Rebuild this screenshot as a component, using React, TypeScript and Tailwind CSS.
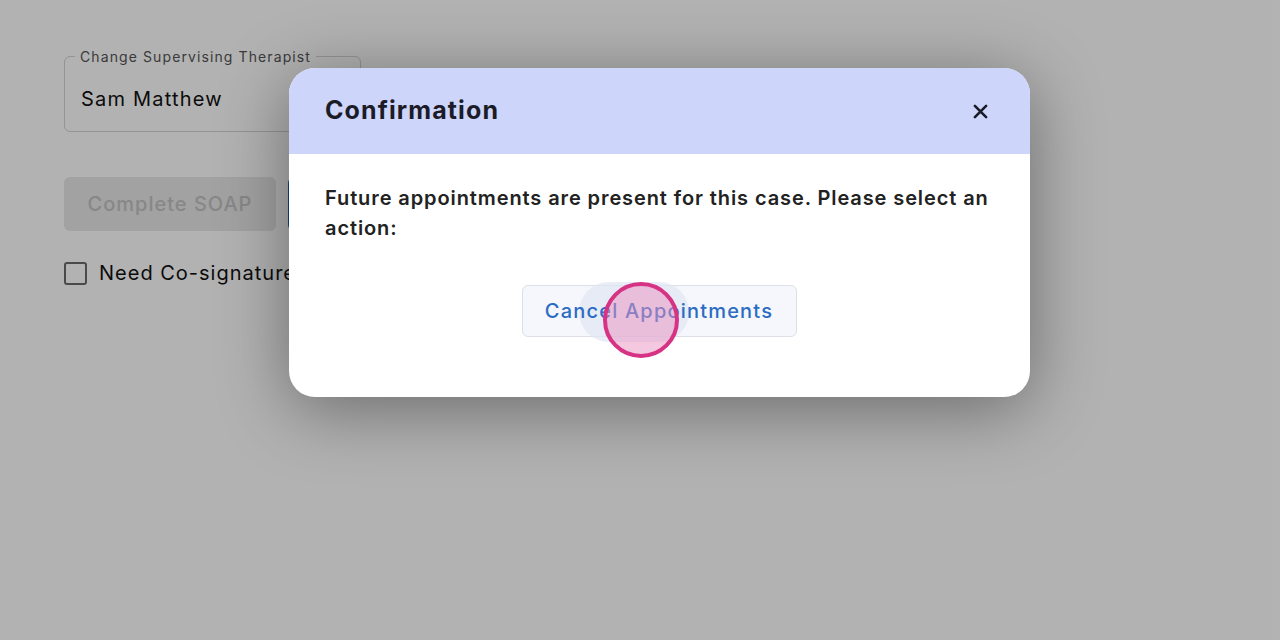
import React from "react";

export default function App() {
  return (
    <div
      className="relative w-[1280px] h-[640px] overflow-hidden bg-white"
      style={{ fontFamily: "Inter, 'Noto Sans', sans-serif" }}
    >
      {/* underlying page */}
      <div className="pl-16 pt-[56px] flex flex-col">
        <div className="relative w-[297px] h-[76px] rounded-md border border-[#d4d4d4] flex items-center px-4">
          <span className="absolute -top-[9px] left-[10px] bg-white px-[5px] text-[14px] leading-[18px] text-[#555] tracking-[1.1px]">
            Change Supervising Therapist
          </span>
          <span className="text-[20px] text-[#111] mt-[10px] tracking-[1.2px]">Sam Matthew</span>
        </div>
        <div className="flex gap-3 mt-[45px]">
          <div className="w-[212px] h-[54px] rounded-md bg-[#e8e8e8] flex items-center justify-center text-[20px] font-medium text-[#c2c2c2] tracking-[1px]">
            Complete SOAP
          </div>
          <div className="w-[212px] h-[54px] rounded-md bg-[#1565c0]" />
        </div>
        <div className="flex items-center gap-3 mt-[27px]">
          <div className="w-[23px] h-[23px] rounded-[3px] border-2 border-[#6b6b6b]" />
          <span className="text-[20px] text-[#111] tracking-[1px]">Need Co-signature</span>
        </div>
      </div>

      {/* overlay */}
      <div className="absolute inset-0 bg-black/30" />

      {/* modal */}
      <div className="absolute left-[289px] top-[68px] w-[741px] h-[329px] rounded-[26px] bg-white overflow-hidden shadow-[0_12px_70px_rgba(0,0,0,0.4)] flex flex-col">
        <div className="h-[86px] bg-[#cdd5fb] flex items-center justify-between pl-[36px] pr-[42px] shrink-0">
          <span className="text-[25px] font-bold text-[#1c1c28] tracking-[1.1px]">Confirmation</span>
          <svg width="15" height="15" viewBox="0 0 16 16" className="text-[#1c1c28]">
            <path d="M2 2 L14 14 M14 2 L2 14" stroke="currentColor" strokeWidth="2.8" strokeLinecap="round" />
          </svg>
        </div>
        <div className="pl-[36px] pr-[20px] pt-[29px] text-[20px] leading-[30px] font-semibold text-[#222] tracking-[0.9px] whitespace-nowrap">
          Future appointments are present for this case. Please select an
          <br />
          action:
        </div>
        <div className="flex justify-center mt-[42px] relative">
          <div className="relative w-[275px] h-[52px] rounded-md border border-[#dcdfe6] bg-[#f5f7fc] flex items-center justify-center text-[20px] font-medium text-[#2b6cc4] ml-[-1px] tracking-[1.2px]">
            <div className="absolute left-[56px] top-[-4px] w-[110px] h-[60px] rounded-full bg-[#dfe6f3] opacity-70" />
            <span className="relative">Cancel Appointments</span>
            <div className="absolute left-[80px] top-[-4px] w-[76px] h-[76px] rounded-full border-[4px] border-[#d63384] bg-[#e991c0]/50" />
          </div>
        </div>
      </div>
    </div>
  );
}
